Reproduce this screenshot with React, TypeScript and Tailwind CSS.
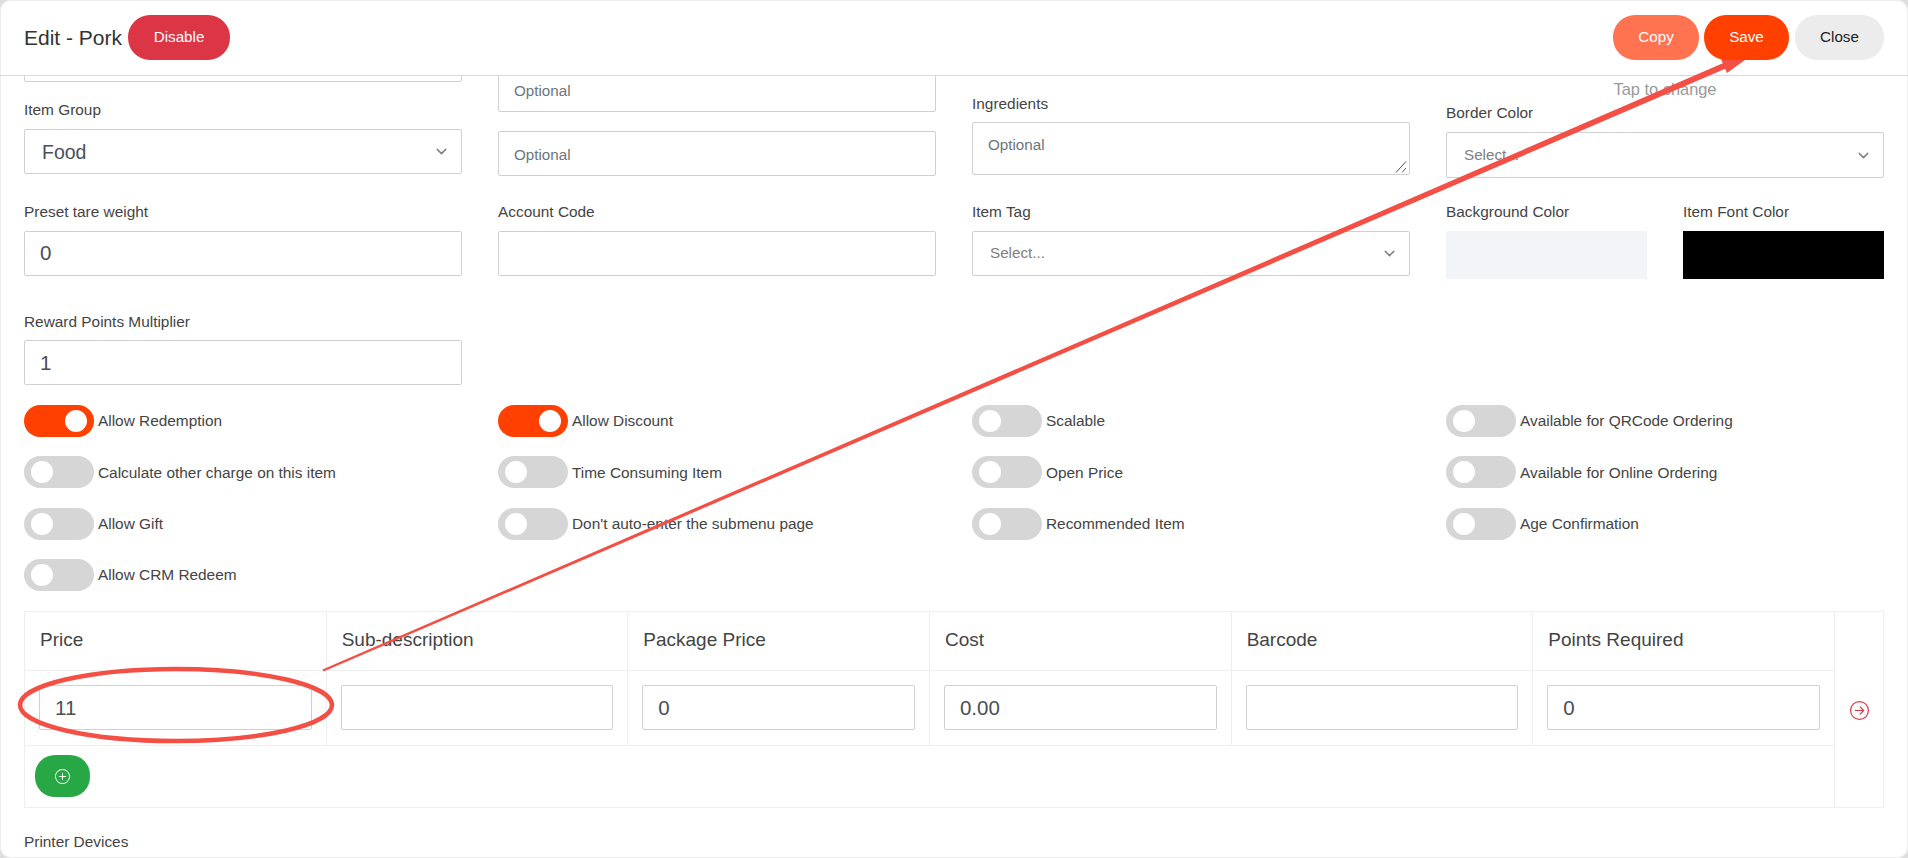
import React from 'react';
import { ChevronDown } from 'lucide-react';
import { BsArrowRightCircle, BsPlusCircle } from 'react-icons/bs';

const toggles = [
  { label: 'Allow Redemption', on: true },
  { label: 'Allow Discount', on: true },
  { label: 'Scalable', on: false },
  { label: 'Available for QRCode Ordering', on: false },
  { label: 'Calculate other charge on this item', on: false },
  { label: 'Time Consuming Item', on: false },
  { label: 'Open Price', on: false },
  { label: 'Available for Online Ordering', on: false },
  { label: 'Allow Gift', on: false },
  { label: "Don't auto-enter the submenu page", on: false },
  { label: 'Recommended Item', on: false },
  { label: 'Age Confirmation', on: false },
  { label: 'Allow CRM Redeem', on: false },
];

const priceColumns = [
  { title: 'Price', value: '11' },
  { title: 'Sub-description', value: '' },
  { title: 'Package Price', value: '0' },
  { title: 'Cost', value: '0.00' },
  { title: 'Barcode', value: '' },
  { title: 'Points Required', value: '0' },
];

const Label: React.FC<{ children: React.ReactNode }> = ({ children }) => (
  <label className="block h-[18px] text-[15.4px] leading-[18px] text-[#444]">{children}</label>
);

const TextInput: React.FC<{ value?: string; placeholder?: string; className?: string }> = ({
  value,
  placeholder,
  className = '',
}) => (
  <input
    readOnly
    defaultValue={value}
    placeholder={placeholder}
    className={`block w-full rounded-[2px] border border-[#d0d0d0] bg-white px-[15px] text-[#495057] outline-none placeholder:text-[#6c757d] ${
      placeholder ? 'text-[15.2px]' : 'text-[20.5px]'
    } ${className || 'h-[44.5px]'}`}
  />
);

const SelectBox: React.FC<{ text: string; placeholder?: boolean; className?: string }> = ({
  text,
  placeholder,
  className = '',
}) => (
  <div
    className={`flex w-full items-center justify-between rounded-[2px] border border-[#d0d0d0] bg-white pl-[17px] pr-[11px] ${className}`}
  >
    <span className={placeholder ? 'text-[15.2px] text-[#808080]' : 'pt-[2px] text-[19.5px] text-[#495057]'}>{text}</span>
    <ChevronDown size={17} strokeWidth={2} className="text-[#808080]" />
  </div>
);

const Toggle: React.FC<{ label: string; on: boolean }> = ({ label, on }) => (
  <div className="flex h-[32px] items-center gap-[4px]">
    <div
      className={`flex h-[32px] w-[70px] items-center rounded-full px-[7px] ${
        on ? 'justify-end bg-[#ff4000]' : 'justify-start bg-[#d6d6d6]'
      }`}
    >
      <div className="h-[22px] w-[22px] rounded-full bg-white" />
    </div>
    <span className="text-[15.4px] text-[#444]">{label}</span>
  </div>
);

export default function App() {
  return (
    <div className="relative h-[858px] w-full overflow-hidden bg-[#dedede] font-['Liberation_Sans',Arial,sans-serif]">
      <div className="flex h-full flex-col rounded-[11px] bg-white shadow-[inset_0_0_0_1px_#eeeeee]">
        {/* Header */}
        <div className="flex h-[76px] shrink-0 items-start justify-between border-b border-[#d9d9d9] px-6 pt-[15px]">
          <div className="flex items-center gap-[6px]">
            <h1 className="text-[21px] font-normal text-[#333]">Edit - Pork</h1>
            <button className="h-[45px] w-[102px] rounded-[22px] bg-[#dc3545] text-[15.2px] text-white">Disable</button>
          </div>
          <div className="flex items-center">
            <button className="h-[45px] w-[86px] rounded-[22px] bg-[#ff7351] text-[15.2px] text-white">Copy</button>
            <button className="relative z-20 ml-[5px] h-[45px] w-[85px] rounded-[22px] bg-[#ff4000] text-[15.2px] text-white">
              Save
            </button>
            <button className="ml-[6px] h-[45px] w-[89px] rounded-[22px] bg-[#ececec] text-[15.2px] text-[#222]">Close</button>
          </div>
        </div>

        {/* Form, scrolled down a little */}
        <div className="min-h-0 flex-1 overflow-hidden px-6">
          <div className="-mt-[41px]">
            <div className="grid grid-cols-4 gap-x-[36px]">
              <div className="pt-[3px]">
                <TextInput className="h-[44px]" />
                <div className="mt-[19px]">
                  <Label>Item Group</Label>
                </div>
                <SelectBox text="Food" className="mt-[10px] h-[45px]" />
              </div>
              <div className="pt-[33px]">
                <TextInput placeholder="Optional" className="h-[44px]" />
                <TextInput placeholder="Optional" className="mt-[19px] h-[45px] pt-[2px]" />
              </div>
              <div className="pt-[60px]">
                <Label>Ingredients</Label>
                <div className="relative mt-[9px]">
                  <textarea
                    readOnly
                    placeholder="Optional"
                    className="block h-[53px] w-full resize-none rounded-[2px] border border-[#d0d0d0] bg-white px-[15px] pt-[11px] text-[15.2px] outline-none placeholder:text-[#6c757d]"
                  />
                  {/* resize grip */}
                  <svg className="absolute bottom-[2px] right-[3px] h-[12px] w-[12px]" viewBox="0 0 12 12">
                    <path d="M1 11.5 L11 0.5 M7 11.5 L11 7" stroke="#555" strokeWidth="1" fill="none" />
                  </svg>
                </div>
              </div>
              <div className="pt-[42px]">
                <p className="text-center text-[16.4px] leading-[24px] text-[#999]">Tap to change</p>
                <div className="mt-[3px]">
                  <Label>Border Color</Label>
                </div>
                <SelectBox text="Select..." placeholder className="mt-[10px] h-[46px]" />
              </div>
            </div>

            <div className="mt-[25px] grid grid-cols-4 gap-x-[36px]">
              <div>
                <Label>Preset tare weight</Label>
                <TextInput value="0" className="mt-[10px] h-[44.5px]" />
              </div>
              <div>
                <Label>Account Code</Label>
                <TextInput className="mt-[10px] h-[44.5px]" />
              </div>
              <div>
                <Label>Item Tag</Label>
                <SelectBox text="Select..." placeholder className="mt-[10px] h-[44.5px]" />
              </div>
              <div className="grid grid-cols-2 gap-x-[36px]">
                <div>
                  <Label>Background Color</Label>
                  <div className="mt-[10px] h-[48px] bg-[#f3f4f8]" />
                </div>
                <div>
                  <Label>Item Font Color</Label>
                  <div className="mt-[10px] h-[48px] bg-black" />
                </div>
              </div>
            </div>

            <div className="mt-[34px] grid grid-cols-4 gap-x-[36px]">
              <div>
                <Label>Reward Points Multiplier</Label>
                <TextInput value="1" className="mt-[9px] h-[45px]" />
              </div>
            </div>

            <div className="mt-[20px] grid grid-cols-4 gap-x-[36px] gap-y-[19.33px]">
              {toggles.map((t) => (
                <Toggle key={t.label} label={t.label} on={t.on} />
              ))}
            </div>

            {/* Price table */}
            <table className="mt-[20px] w-full table-fixed border-collapse">
              <tbody>
                <tr className="h-[59px]">
                  {priceColumns.map((c) => (
                    <th
                      key={c.title}
                      className="border border-[#efefef] px-[15px] pb-[2px] text-left text-[19px] font-normal text-[#444]"
                    >
                      {c.title}
                    </th>
                  ))}
                  <td rowSpan={3} className="w-[49px] border border-[#efefef] text-center align-middle">
                    <BsArrowRightCircle size={19} className="inline-block text-[#dc3545]" />
                  </td>
                </tr>
                <tr className="h-[75px]">
                  {priceColumns.map((c) => (
                    <td key={c.title} className="border border-[#efefef] px-[14px]">
                      <TextInput value={c.value} className="h-[45px]" />
                    </td>
                  ))}
                </tr>
                <tr className="h-[62px]">
                  <td colSpan={6} className="border border-[#efefef] pl-[10px]">
                    <button className="flex h-[42px] w-[55px] items-center justify-center rounded-[20px] bg-[#28a745] text-white">
                      <BsPlusCircle size={15} />
                    </button>
                  </td>
                </tr>
              </tbody>
            </table>

            <div className="mt-[25px]">
              <Label>Printer Devices</Label>
            </div>
          </div>
        </div>
      </div>

      {/* Red annotation drawn on the screenshot */}
      <svg className="pointer-events-none absolute left-0 top-0 z-10 h-[858px] w-[1908px]" viewBox="0 0 1908 858">
        <polygon
          points="322.5,669.5 1722.8,63.2 1721,59.1 1756,52 1727,72.9 1725.2,68.8 323.5,671.5"
          fill="#f44f44"
        />
        <ellipse cx="176" cy="705" rx="156" ry="36" fill="none" stroke="#f44f44" strokeWidth="4.5" />
      </svg>
    </div>
  );
}
